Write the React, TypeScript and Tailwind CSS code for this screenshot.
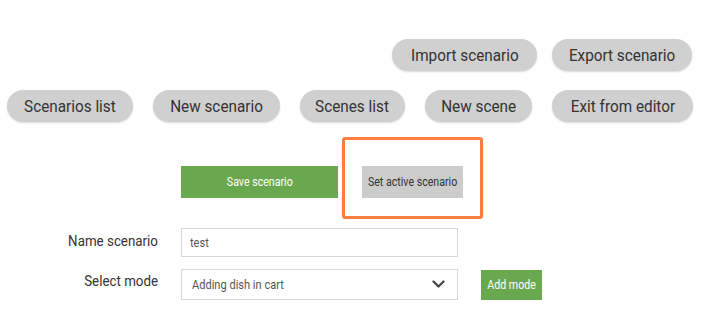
import React from "react";

const Pill = ({ children, w }: { children: React.ReactNode; w: string }) => (
  <button
    className={`flex h-[32px] items-center justify-center whitespace-nowrap rounded-full bg-[#d0d0d0] text-[17px] leading-none text-[#333] shadow-[0_1px_2px_rgba(0,0,0,0.15)] [font-family:Roboto,sans-serif] ${w}`}
  >
    <span className="inline-block scale-x-[0.9]">{children}</span>
  </button>
);

export default function App() {
  return (
    <div className="h-[314px] w-[713px] bg-white [font-family:Roboto,sans-serif]">
      <div className="flex justify-end gap-[15px] pr-[21px] pt-[39px]">
        <Pill w="w-[145px]">Import scenario</Pill>
        <Pill w="w-[140px]">Export scenario</Pill>
      </div>
      <div className="mt-[19px] flex justify-end gap-[20px] pr-[20px]">
        <Pill w="w-[126px]">Scenarios list</Pill>
        <Pill w="w-[127px]">New scenario</Pill>
        <Pill w="w-[105px]">Scenes list</Pill>
        <Pill w="w-[107px]">New scene</Pill>
        <Pill w="w-[141px]">Exit from editor</Pill>
      </div>
      <div className="mt-[15px] flex items-start pl-[181px]">
        <button className="mt-[29px] flex h-[32px] w-[157px] items-center justify-center bg-[#6aa84f] text-[12.5px] text-white">
          <span className="inline-block scale-x-[0.85] whitespace-nowrap">Save scenario</span>
        </button>
        <div className="ml-[4px] flex h-[82px] w-[141px] justify-center rounded-[3px] border-[3px] border-[#ff7f3f] pt-[26px]">
          <button className="flex h-[32px] w-[101px] items-center justify-center bg-[#cccccc] text-[12.5px] text-[#333]">
            <span className="inline-block scale-x-[0.85] whitespace-nowrap">Set active scenario</span>
          </button>
        </div>
      </div>
      <div className="mt-[9px] flex items-start">
        <div className="w-[158px] pt-[2px] text-right text-[15px] text-[#333]">
          <span className="inline-block origin-right scale-x-[0.89] whitespace-nowrap">Name scenario</span>
        </div>
        <div className="ml-[23px] flex h-[29px] w-[277px] items-center border border-[#d5d9de] px-[8px] text-[13px] text-[#555]">
          <span className="inline-block origin-left scale-x-[0.85]">test</span>
        </div>
      </div>
      <div className="mt-[12px] flex items-start">
        <div className="w-[158px] pt-[1px] text-right text-[15px] text-[#333]">
          <span className="inline-block origin-right scale-x-[0.89] whitespace-nowrap">Select mode</span>
        </div>
        <div className="ml-[23px] flex h-[31px] w-[277px] items-center justify-between border border-[#d5d9de] pl-[10px] pr-[12px] text-[13px] text-[#555]">
          <span className="inline-block origin-left scale-x-[0.85] whitespace-nowrap">Adding dish in cart</span>
          <svg width="13" height="9" viewBox="0 0 13 9" fill="none">
            <path d="M1.5 1.5 L6.5 6.5 L11.5 1.5" stroke="#444" strokeWidth="2.2" strokeLinecap="round" strokeLinejoin="round" />
          </svg>
        </div>
        <button className="ml-[23px] mt-[1px] flex h-[30px] w-[61px] items-center justify-center bg-[#6aa84f] text-[12.5px] text-white">
          <span className="inline-block scale-x-[0.85] whitespace-nowrap">Add mode</span>
        </button>
      </div>
    </div>
  );
}
